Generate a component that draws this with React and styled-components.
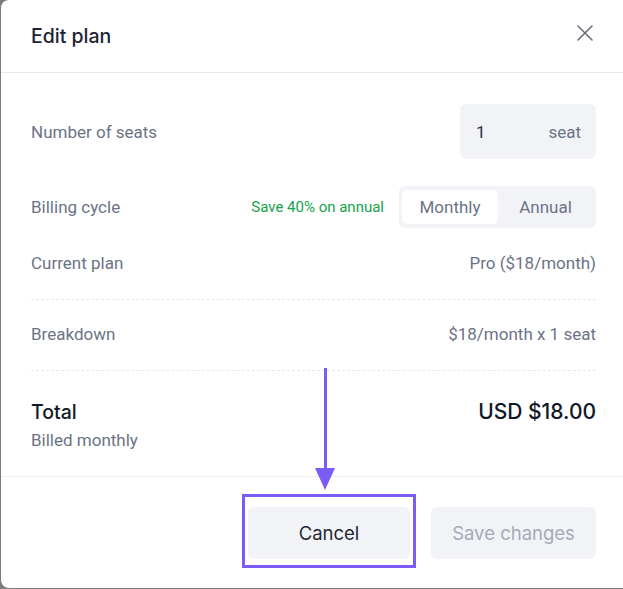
import styled, { createGlobalStyle } from "styled-components";

const GlobalStyle = createGlobalStyle`
  html, body {
    margin: 0;
    padding: 0;
    background: #7d7d7d;
    overflow: hidden;
  }
  * {
    box-sizing: border-box;
  }
`;

const Dialog = styled.div`
  margin-left: 1px;
  width: 640px;
  height: 588px;
  background: #ffffff;
  border-radius: 8px;
  font-family: Roboto, "Liberation Sans", sans-serif;
  display: flex;
  flex-direction: column;
`;

const Header = styled.div`
  height: 74px;
  border-bottom: 1px solid #e5e7eb;
  display: flex;
  align-items: center;
  justify-content: space-between;
  padding: 0 48px 0 30px;
`;

const Title = styled.h2`
  margin: 0;
  font-family: Inter, "Open Sans", sans-serif;
  font-size: 19.5px;
  font-weight: 500;
  color: #1c2434;
`;

const CloseButton = styled.button`
  border: 0;
  background: none;
  padding: 0;
  width: 16px;
  height: 16px;
  margin-top: -6px;
  display: flex;
  cursor: pointer;
`;

const Body = styled.div`
  padding: 31px 45px 26px 30px;
  display: flex;
  flex-direction: column;
  gap: 26px;
`;

const Row = styled.div`
  display: flex;
  align-items: center;
  justify-content: space-between;
  line-height: 20px;
  margin: ${({ $shift }) => ($shift ? "1px 0 -1px" : "0")};
`;

const Label = styled.span`
  font-size: 17px;
  color: #6b7386;
`;

const Value = styled.span`
  font-size: 17px;
  color: #6b7386;
`;

const SeatInput = styled.div`
  width: 136px;
  height: 55px;
  background: #f2f3f6;
  border-radius: 6px;
  display: flex;
  align-items: center;
  justify-content: space-between;
  padding: 0 15px 0 16px;
  font-size: 17px;
`;

const SeatCount = styled.span`
  color: #2b3242;
`;

const Cycle = styled.div`
  display: flex;
  align-items: center;
  gap: 15px;
`;

const Promo = styled.span`
  font-size: 15px;
  color: #16a34a;
`;

const Segmented = styled.div`
  display: flex;
  background: #f2f3f6;
  border-radius: 6px;
  padding: 4px 3px;
`;

const Segment = styled.button`
  border: 0;
  width: ${({ $wide }) => $wide}px;
  height: 34px;
  border-radius: 5px;
  background: ${({ $active }) => ($active ? "#ffffff" : "transparent")};
  font-family: Roboto, "Liberation Sans", sans-serif;
  font-size: 17px;
  color: #6b7386;
  cursor: pointer;
`;

const Divider = styled.hr`
  margin: 0 0 -2px;
  border: 0;
  border-top: 1px dashed #e6e8ec;
`;

const TotalRow = styled.div`
  display: flex;
  justify-content: space-between;
  align-items: flex-start;
  padding-top: 3px;
`;

const TotalInfo = styled.div`
  display: flex;
  flex-direction: column;
  gap: 4px;
`;

const TotalLabel = styled.span`
  font-family: Inter, "Open Sans", sans-serif;
  font-size: 19.5px;
  font-weight: 500;
  line-height: 28px;
  color: #111827;
`;

const TotalSub = styled.span`
  font-size: 17px;
  line-height: 20px;
  color: #6b7386;
`;

const Amount = styled.span`
  font-family: Inter, "Open Sans", sans-serif;
  font-size: 21px;
  font-weight: 500;
  line-height: 28px;
  color: #111827;
`;

const Footer = styled.div`
  border-top: 1px solid #eef0f3;
  padding: 30px 45px 29px 30px;
  display: flex;
  justify-content: flex-end;
  gap: 21px;
`;

const Button = styled.button`
  position: relative;
  border: 0;
  height: 52px;
  width: ${({ $wide }) => $wide}px;
  border-radius: 6px;
  background: #f2f3f6;
  font-family: Inter, "Open Sans", sans-serif;
  font-size: 18.5px;
  font-weight: 400;
  color: ${({ $muted }) => ($muted ? "#a3abba" : "#1f2635")};
  cursor: pointer;
`;

const Highlight = styled.span`
  position: absolute;
  top: -13px;
  left: -6px;
  right: -6px;
  bottom: -9px;
  border: 3px solid #7b5cf6;
  pointer-events: none;
`;

const ArrowLine = styled.span`
  position: absolute;
  left: 76px;
  top: -139px;
  width: 3px;
  height: 104px;
  background: #7b5cf6;
`;

const ArrowHead = styled.span`
  position: absolute;
  left: 67px;
  top: -39px;
  width: 0;
  height: 0;
  border-left: 10.5px solid transparent;
  border-right: 10.5px solid transparent;
  border-top: 22px solid #7b5cf6;
`;

export default function App() {
  return (
    <>
      <GlobalStyle />
      <Dialog>
        <Header>
          <Title>Edit plan</Title>
          <CloseButton aria-label="Close">
            <svg width="16" height="16" viewBox="0 0 16 16" fill="none">
              <path
                d="M1 1L15 15M15 1L1 15"
                stroke="#6b6f78"
                strokeWidth="1.6"
                strokeLinecap="round"
              />
            </svg>
          </CloseButton>
        </Header>
        <Body>
          <Row>
            <Label>Number of seats</Label>
            <SeatInput>
              <SeatCount>1</SeatCount>
              <Value>seat</Value>
            </SeatInput>
          </Row>
          <Row $shift>
            <Label>Billing cycle</Label>
            <Cycle>
              <Promo>Save 40% on annual</Promo>
              <Segmented>
                <Segment $active $wide={96}>Monthly</Segment>
                <Segment $wide={95}>Annual</Segment>
              </Segmented>
            </Cycle>
          </Row>
          <Row>
            <Label>Current plan</Label>
            <Value>Pro ($18/month)</Value>
          </Row>
          <Divider />
          <Row>
            <Label>Breakdown</Label>
            <Value>$18/month x 1 seat</Value>
          </Row>
          <Divider />
          <TotalRow>
            <TotalInfo>
              <TotalLabel>Total</TotalLabel>
              <TotalSub>Billed monthly</TotalSub>
            </TotalInfo>
            <Amount>USD $18.00</Amount>
          </TotalRow>
        </Body>
        <Footer>
          <Button $wide={162}>
            <ArrowLine />
            <ArrowHead />
            <Highlight />
            Cancel
          </Button>
          <Button $wide={165} $muted>
            Save changes
          </Button>
        </Footer>
      </Dialog>
    </>
  );
}
